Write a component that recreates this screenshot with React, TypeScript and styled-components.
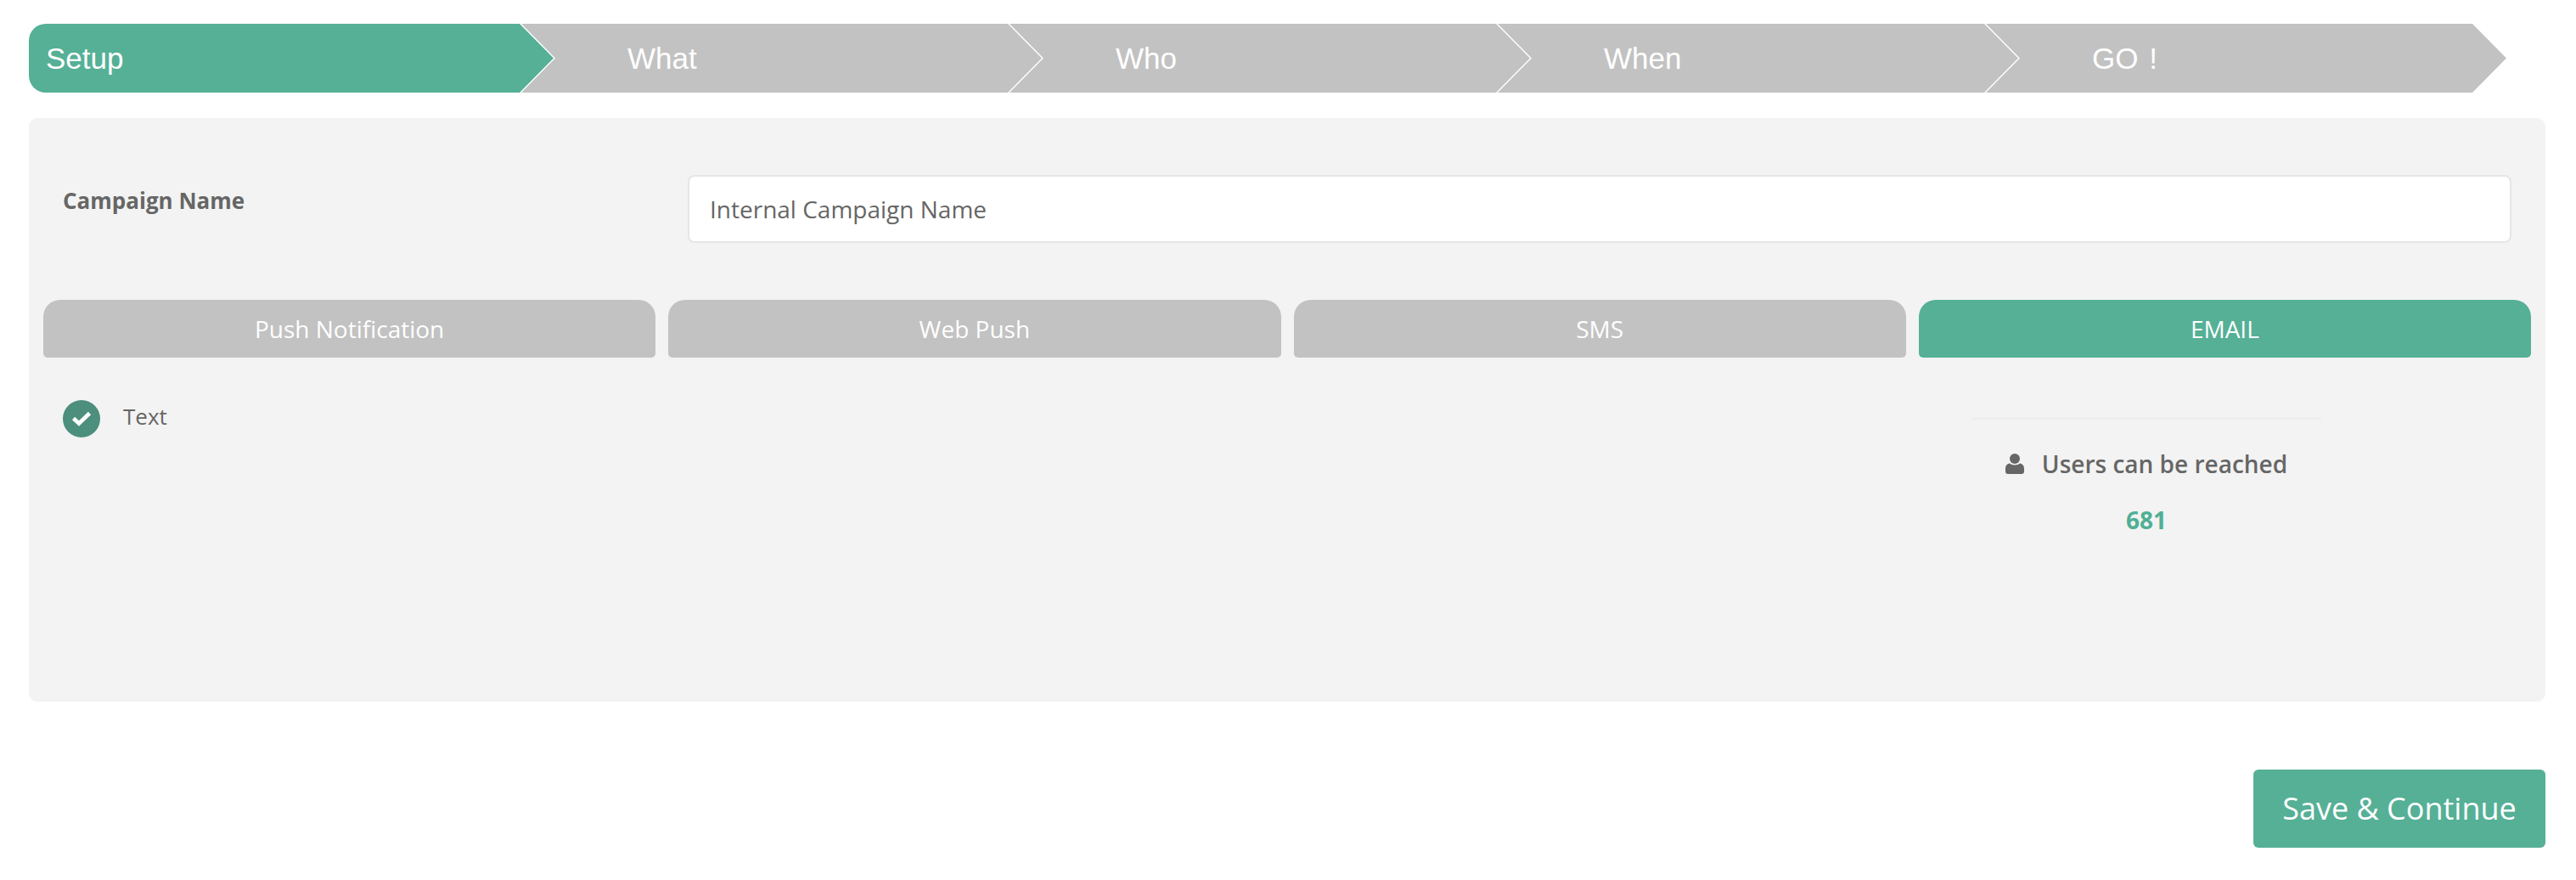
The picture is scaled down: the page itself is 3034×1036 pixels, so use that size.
import React from "react";
import styled, { createGlobalStyle } from "styled-components";

const GlobalStyle = createGlobalStyle`
  html, body {
    margin: 0;
    background: #fff;
  }
  * {
    box-sizing: border-box;
  }
`;

const Page = styled.div`
  width: 3034px;
  height: 1036px;
  padding: 28px 36px 0 34px;
  font-family: "Open Sans", sans-serif;
  color: #666;
  overflow: hidden;
`;

const Steps = styled.ol`
  display: flex;
  list-style: none;
  margin: 0 0 30px;
  padding: 0;
  height: 81px;
`;

const Step = styled.li<{ $active?: boolean; $first?: boolean }>`
  display: flex;
  align-items: center;
  flex: none;
  width: ${({ $first }) => ($first ? "618px" : "613px")};
  height: 81px;
  margin-left: ${({ $first }) => ($first ? "0" : "-38px")};
  padding-left: ${({ $first }) => ($first ? "20px" : "125px")};
  background: ${({ $active }) => ($active ? "#55b096" : "#c2c2c2")};
  border-radius: ${({ $first }) => ($first ? "20px 0 0 20px" : "0")};
  clip-path: ${({ $first }) =>
    $first
      ? "polygon(0 0, calc(100% - 40px) 0, 100% 50%, calc(100% - 40px) 100%, 0 100%)"
      : "polygon(0 0, calc(100% - 40px) 0, 100% 50%, calc(100% - 40px) 100%, 0 100%, 40px 50%)"};
  color: #fff;
  font-family: "Liberation Sans", Arial, sans-serif;
  font-size: 35px;
  word-spacing: 3px;
`;

const Panel = styled.section`
  height: 687px;
  padding: 67px 17px 0 17px;
  background: #f3f3f3;
  border-radius: 10px;
`;

const NameRow = styled.div`
  display: flex;
  align-items: flex-start;
  padding: 0 23px;
  margin-bottom: 67px;
`;

const NameLabel = styled.label`
  flex: none;
  width: 736px;
  padding-top: 12px;
  font-size: 26px;
  font-weight: 700;
  line-height: 36px;
`;

const NameInput = styled.div`
  flex: 1;
  height: 80px;
  padding: 0 24px;
  display: flex;
  align-items: center;
  background: #fff;
  border: 2px solid #e6e6e6;
  border-radius: 8px;
  font-size: 28px;
`;

const Tabs = styled.div`
  display: grid;
  grid-template-columns: repeat(4, 1fr);
  gap: 15px;
`;

const Tab = styled.button<{ $active?: boolean }>`
  height: 68px;
  padding: 0;
  border: 0;
  border-radius: 20px 20px 5px 5px;
  background: ${({ $active }) => ($active ? "#55b096" : "#c2c2c2")};
  color: #fff;
  font-family: inherit;
  font-size: 28px;
`;

const Body = styled.div`
  display: flex;
  justify-content: space-between;
  padding: 50px 247px 0 23px;
`;

const Option = styled.div`
  display: flex;
  align-items: center;
  gap: 27px;
  height: 44px;
  font-size: 26px;
`;

const OptionLabel = styled.span`
  padding-bottom: 6px;
`;

const CheckCircle = styled.span`
  display: flex;
  align-items: center;
  justify-content: center;
  width: 44px;
  height: 44px;
  border-radius: 50%;
  background: #4b8f7c;
`;

const Reach = styled.div`
  width: 412px;
  margin-top: 21px;
  border-top: 2px solid #ececec;
  text-align: center;
`;

const ReachTitle = styled.div`
  display: flex;
  justify-content: center;
  align-items: center;
  gap: 21px;
  margin-top: 32px;
  font-size: 28px;
  font-weight: 600;
  line-height: 40px;
`;

const ReachCount = styled.div`
  margin-top: 26px;
  color: #4fb094;
  font-size: 28px;
  font-weight: 700;
  line-height: 40px;
`;

const Footer = styled.div`
  display: flex;
  justify-content: flex-end;
  margin-top: 80px;
`;

const SaveButton = styled.button`
  width: 344px;
  height: 92px;
  padding: 0 0 2px;
  border: 0;
  border-radius: 6px;
  background: #55b096;
  color: #fff;
  font-family: inherit;
  font-size: 36px;
`;

const steps = ["Setup", "What", "Who", "When", "GO !"];
const channels = ["Push Notification", "Web Push", "SMS", "EMAIL"];

export default function App() {
  return (
    <Page>
      <GlobalStyle />
      <Steps>
        {steps.map((step, i) => (
          <Step key={step} $first={i === 0} $active={i === 0}>
            {step}
          </Step>
        ))}
      </Steps>
      <Panel>
        <NameRow>
          <NameLabel>Campaign Name</NameLabel>
          <NameInput>Internal Campaign Name</NameInput>
        </NameRow>
        <Tabs>
          {channels.map((channel) => (
            <Tab key={channel} $active={channel === "EMAIL"}>
              {channel}
            </Tab>
          ))}
        </Tabs>
        <Body>
          <Option>
            <CheckCircle>
              <svg width="24" height="20" viewBox="0 0 24 20" fill="none">
                <path d="M2.5 9.5 L9 15.5 L21.5 3.5" stroke="#fff" strokeWidth="4.6" />
              </svg>
            </CheckCircle>
            <OptionLabel>Text</OptionLabel>
          </Option>
          <Reach>
            <ReachTitle>
              <svg width="22" height="24" viewBox="0 0 22 24" fill="#666">
                <circle cx="11" cy="6" r="6" />
                <path d="M5 11.5 C7 14 15 14 17 11.5 C20 12 22 14 22 18 V21 C22 23 21 24 19 24 H3 C1 24 0 23 0 21 V18 C0 14 2 12 5 11.5 Z" />
              </svg>
              Users can be reached
            </ReachTitle>
            <ReachCount>681</ReachCount>
          </Reach>
        </Body>
      </Panel>
      <Footer>
        <SaveButton>Save &amp; Continue</SaveButton>
      </Footer>
    </Page>
  );
}
